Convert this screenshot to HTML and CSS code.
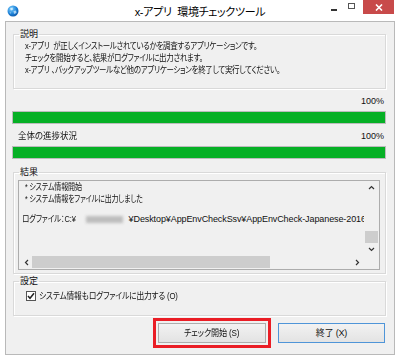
FILE: index.html
```html
<!DOCTYPE html>
<html lang="ja">
<head>
<meta charset="utf-8">
<link rel="stylesheet" href="styles.css">
</head>
<body>
<div class="window">
  <div class="titlebar">
    <div class="tb-left">
      <svg class="appicon" width="12" height="12" viewBox="0 0 12 12">
        <defs>
          <radialGradient id="g" cx="0.35" cy="0.3" r="0.8">
            <stop offset="0" stop-color="#7fd0ff"/>
            <stop offset="0.6" stop-color="#1a7fd6"/>
            <stop offset="1" stop-color="#0a4f9e"/>
          </radialGradient>
        </defs>
        <circle cx="6" cy="6" r="5.5" fill="url(#g)"/>
        <path d="M3 3.5 L5.5 2.5 L6 4.5 L4 5.5 Z" fill="#dff3ff" opacity="0.85"/>
        <path d="M6.5 6 L9 5.5 L9.5 8 L7 9 Z" fill="#dff3ff" opacity="0.7"/>
        <path d="M2.5 7 L4 7.5 L3.5 9 Z" fill="#dff3ff" opacity="0.6"/>
      </svg>
    </div>
    <div class="title">x-アプリ&nbsp;&nbsp;環境チェックツール</div>
    <div class="controls">
      <div class="ctl ctl-min"><span class="min-bar"></span></div>
      <div class="ctl ctl-max"><span class="max-box"></span></div>
      <div class="ctl ctl-close">
        <svg width="8" height="7" viewBox="0 0 8 7"><path d="M1 0.5 L7 6.5 M7 0.5 L1 6.5" stroke="#fff" stroke-width="1.6"/></svg>
      </div>
    </div>
  </div>

  <div class="client">
    <fieldset class="group g-desc">
      <legend>説明</legend>
      <div class="desc">
        <div><span class="sx s-desc">x-アプリ&nbsp;&nbsp;が正しくインストールされているかを調査するアプリケーションです。</span></div>
        <div><span class="sx s-desc">チェックを開始すると、結果がログファイルに出力されます。</span></div>
        <div><span class="sx s-desc">x-アプリ&nbsp;、バックアップツールなど他のアプリケーションを終了して実行してください。</span></div>
      </div>
    </fieldset>

    <div class="prog-label"><span></span><span>100%</span></div>
    <div class="bar"><div class="fill" style="width:100%"></div></div>
    <div class="prog-label second"><span class="sx s-label">全体の進捗状況</span><span>100%</span></div>
    <div class="bar"><div class="fill" style="width:100%"></div></div>

    <fieldset class="group g-result">
      <legend>結果</legend>
      <div class="textbox">
        <div class="tb-main">
          <div class="tb-content">
            <div class="ln star"><span class="sx s-res">* システム情報開始</span></div>
            <div class="ln star"><span class="sx s-res">* システム情報をファイルに出力しました</span></div>
            <div class="ln blank"></div>
            <div class="ln logline"><span class="sx s-log">ログファイル：C:¥</span><span class="blur"></span><span class="path">¥Desktop¥AppEnvCheckSsv¥AppEnvCheck-Japanese-2016</span></div>
          </div>
          <div class="vscroll">
            <svg class="arr" width="7" height="5" viewBox="0 0 7 5"><path d="M1 4 L3.5 1.5 L6 4" fill="none" stroke="#333" stroke-width="1.2"/></svg>
            <div class="vtrack"><div class="vthumb"></div></div>
            <svg class="arr" width="7" height="5" viewBox="0 0 7 5"><path d="M1 1 L3.5 3.5 L6 1" fill="none" stroke="#333" stroke-width="1.2"/></svg>
          </div>
        </div>
        <div class="hrow">
          <div class="hscroll">
            <svg class="harr" width="5" height="7" viewBox="0 0 5 7"><path d="M4 1 L1.5 3.5 L4 6" fill="none" stroke="#333" stroke-width="1.2"/></svg>
            <div class="htrack"><div class="hthumb"></div></div>
            <svg class="harr" width="5" height="7" viewBox="0 0 5 7"><path d="M1 1 L3.5 3.5 L1 6" fill="none" stroke="#333" stroke-width="1.2"/></svg>
          </div>
          <div class="corner"></div>
        </div>
      </div>
    </fieldset>

    <fieldset class="group g-settings">
      <legend>設定</legend>
      <label class="check">
        <span class="cbox"><svg width="8" height="8" viewBox="0 0 8 8"><path d="M1 4 L3 6.3 L7 1.2" fill="none" stroke="#222" stroke-width="1.5"/></svg></span>
        <span class="sx s-check">システム情報もログファイルに出力する (O)</span>
      </label>
    </fieldset>

    <div class="buttons">
      <button class="btn hl"><span class="sx s-btn">チェック開始 (S)</span></button>
      <button class="btn def">終了 (X)</button>
    </div>
  </div>
</div>
</body>
</html>
```

FILE: styles.css
```css
* { box-sizing: border-box; }
html, body { margin: 0; padding: 0; background: #fff; }
body {
  font-family: "Liberation Sans", "Noto Sans CJK JP", sans-serif;
  font-size: 9px;
  line-height: 12px;
  color: #111;
  font-feature-settings: "palt";
}
.sx {
  display: inline-block;
  white-space: nowrap;
  transform-origin: 0 50%;
}
.s-desc { transform: scaleX(0.83); }
.s-label { transform: scaleX(0.94); }
.s-res { transform: scaleX(0.78); }
.s-log { transform: scaleX(0.83); margin-right: -11px; }
.s-check { transform: scaleX(0.86); }
.s-btn { transform: scaleX(0.9); transform-origin: 50% 50%; }

.window {
  width: 400px;
  height: 359px;
  background: #fff;
  display: flex;
  flex-direction: column;
  padding: 0 5px 4px 5px;
}
.titlebar {
  height: 21px;
  display: grid;
  grid-template-columns: 1fr auto 1fr;
  align-items: start;
  margin: 0 -5px;
}
.tb-left { padding: 5px 0 0 7px; }
.appicon { display: block; }
.title {
  font-size: 11px;
  line-height: 14px;
  padding-top: 5px;
  color: #000;
  letter-spacing: -0.3px;
}
.controls {
  display: flex;
  justify-content: flex-end;
  align-items: flex-start;
  padding-right: 6px;
}
.ctl { height: 14px; display: flex; align-items: center; justify-content: center; }
.ctl-min { width: 14px; margin-right: 3px; }
.min-bar { width: 6px; height: 2px; background: #333; margin-top: 6px; }
.ctl-max { width: 14px; margin-right: 5px; }
.max-box { width: 7px; height: 6px; border: 1px solid #555; margin-top: -3px; }
.ctl-close { width: 31px; background: #c84a4a; }
.ctl-close svg { display: block; }

.client {
  flex: 1;
  background: #f0f0f0;
  border: 1px solid #b9b9b9;
  padding: 6px 8px 0 7px;
  display: flex;
  flex-direction: column;
}
.group {
  margin: 0;
  border: 1px solid #d9d9d9;
  box-shadow: inset 1px 1px 0 #fff, 1px 1px 0 #fff;
  padding: 0 5px 0 4px;
  min-width: 0;
}
.group legend {
  padding: 0 1px;
  margin-left: 1px;
  line-height: 12px;
  color: #111;
}
.g-desc { padding-bottom: 12px; }
.desc { padding: 0 0 0 7px; letter-spacing: -0.35px; white-space: nowrap; }

.prog-label {
  display: flex;
  justify-content: space-between;
  margin-top: 6px;
  padding: 0 2px 0 5px;
}
.bar {
  margin: 4px 0 0 -1px;
  height: 13px;
  border: 1px solid #bcbcbc;
  background: #e6e6e6;
}
.fill { height: 100%; background: #06b025; }

.g-result { margin-top: 7px; padding-top: 2px; padding-bottom: 3px; }
.textbox {
  border: 1px solid #acacac;
  height: 90px;
  display: flex;
  flex-direction: column;
  background: #f0f0f0;
}
.tb-main { flex: 1; display: flex; min-height: 0; }
.tb-content {
  flex: 1;
  min-width: 0;
  padding: 0 0 0 3px;
  overflow: hidden;
  white-space: nowrap;
  letter-spacing: -0.2px;
}
.ln { height: 12px; }
.ln.star { padding-left: 3px; }
.ln.blank { height: 8px; }
.logline { display: flex; align-items: center; }
.blur {
  flex: none;
  display: inline-block;
  width: 37px;
  height: 7px;
  background: #bdbdbd;
  filter: blur(1.5px);
  margin: 0 6px 0 10px;
}
.path { flex: none; letter-spacing: -0.1px; }
.vscroll {
  width: 15px;
  flex: none;
  display: flex;
  flex-direction: column;
  align-items: center;
  padding: 4px 0 3px;
}
.arr { display: block; }
.vtrack { flex: 1; width: 100%; display: flex; flex-direction: column; justify-content: flex-end; padding: 0 0 4px; }
.vthumb { height: 12px; margin: 0 1px; background: #cdcdcd; }
.hrow { height: 14px; display: flex; }
.hscroll { flex: 1; display: flex; align-items: center; padding: 0 4px 0 5px; }
.harr { display: block; flex: none; }
.htrack { flex: 1; height: 100%; padding: 1px 4px 1px 3px; }
.hthumb { width: 74.5%; height: 100%; background: #cdcdcd; }
.corner { width: 15px; }

.g-settings { margin-top: 1px; padding-top: 3px; padding-bottom: 13px; }
.check { display: flex; align-items: center; gap: 3px; padding-left: 8px; letter-spacing: -0.2px; }
.cbox {
  flex: none;
  width: 10px; height: 10px;
  border: 1px solid #555;
  background: #fff;
  display: flex; align-items: center; justify-content: center;
}
.cbox svg { display: block; }

.buttons {
  display: flex;
  justify-content: flex-end;
  gap: 12px;
  margin-top: 7px;
  padding-right: 1px;
}
.btn {
  font: inherit;
  font-feature-settings: "palt";
  letter-spacing: -0.2px;
  width: 108px;
  height: 20px;
  padding: 0;
  color: #111;
  border: 1px solid #adadad;
  background: linear-gradient(#f2f2f2, #e3e3e3);
  border-radius: 0;
}
.btn.def { width: 107px; border-color: #4f95d8; }
.btn.hl { outline: 3px solid #ea1d25; outline-offset: 2px; }
```
